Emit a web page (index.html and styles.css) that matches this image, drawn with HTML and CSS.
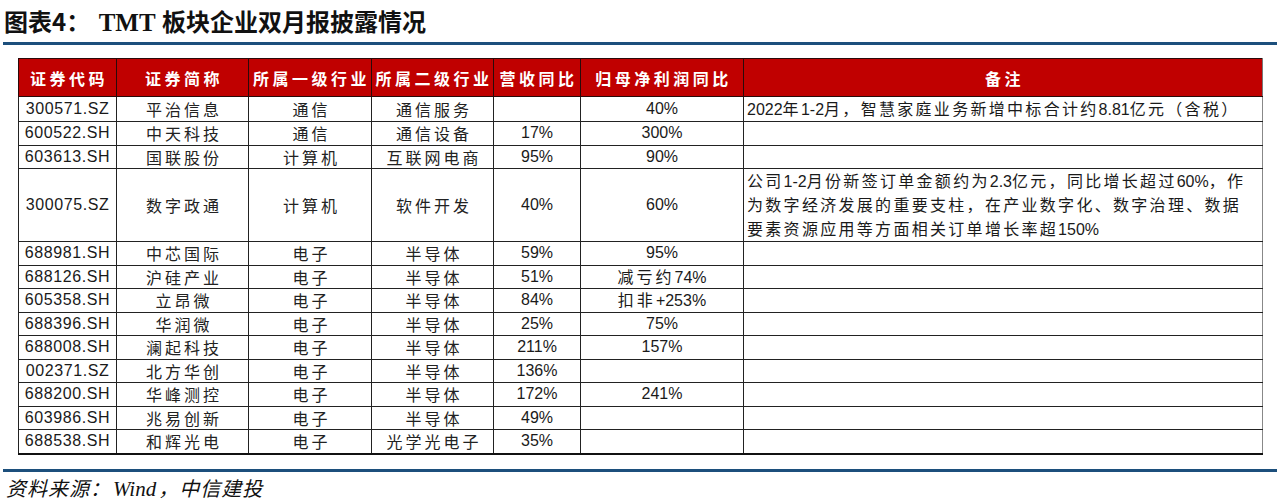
FILE: index.html
```html
<!DOCTYPE html>
<html lang="zh-CN">
<head>
<meta charset="utf-8">
<title>图表4：TMT 板块企业双月报披露情况</title>
<link rel="stylesheet" href="styles.css">
</head>
<body>
<div class="title"><span class="fig">图表4：</span> <span class="tmt">TMT</span> 板块企业双月报披露情况</div>
<div class="rule rule-top"></div>
<table class="grid">
  <colgroup>
    <col class="c1"><col class="c2"><col class="c3"><col class="c4"><col class="c5"><col class="c6"><col class="c7">
  </colgroup>
  <thead>
    <tr>
      <th>证券代码</th><th>证券简称</th><th>所属一级行业</th><th>所属二级行业</th><th>营收同比</th><th>归母净利润同比</th><th class="last">备注</th>
    </tr>
  </thead>
  <tbody>
    <tr><td class="code">300571.SZ</td><td class="cn">平治信息</td><td class="cn">通信</td><td class="cn">通信服务</td><td class="pct"></td><td class="pct">40%</td><td class="note">2022<span class="h">年</span>1-2<span class="h">月，智慧家庭业务新增中标合计约</span>8.81<span class="h">亿元（含税）</span></td></tr>
    <tr><td class="code">600522.SH</td><td class="cn">中天科技</td><td class="cn">通信</td><td class="cn">通信设备</td><td class="pct">17%</td><td class="pct">300%</td><td class="note"></td></tr>
    <tr><td class="code">603613.SH</td><td class="cn">国联股份</td><td class="cn">计算机</td><td class="cn">互联网电商</td><td class="pct">95%</td><td class="pct">90%</td><td class="note"></td></tr>
    <tr class="tall"><td class="code">300075.SZ</td><td class="cn">数字政通</td><td class="cn">计算机</td><td class="cn">软件开发</td><td class="pct">40%</td><td class="pct">60%</td><td class="note"><span class="h">公司</span>1-2<span class="h">月份新签订单金额约为</span>2.3<span class="h">亿元，同比增长超过</span>60%<span class="h">，作</span><br><span class="h">为数字经济发展的重要支柱，在产业数字化、数字治理、数据</span><br><span class="h">要素资源应用等方面相关订单增长率超</span>150%</td></tr>
    <tr><td class="code">688981.SH</td><td class="cn">中芯国际</td><td class="cn">电子</td><td class="cn">半导体</td><td class="pct">59%</td><td class="pct">95%</td><td class="note"></td></tr>
    <tr><td class="code">688126.SH</td><td class="cn">沪硅产业</td><td class="cn">电子</td><td class="cn">半导体</td><td class="pct">51%</td><td class="pct"><span class="h">减亏约</span>74%</td><td class="note"></td></tr>
    <tr><td class="code">605358.SH</td><td class="cn">立昂微</td><td class="cn">电子</td><td class="cn">半导体</td><td class="pct">84%</td><td class="pct"><span class="h">扣非</span>+253%</td><td class="note"></td></tr>
    <tr><td class="code">688396.SH</td><td class="cn">华润微</td><td class="cn">电子</td><td class="cn">半导体</td><td class="pct">25%</td><td class="pct">75%</td><td class="note"></td></tr>
    <tr><td class="code">688008.SH</td><td class="cn">澜起科技</td><td class="cn">电子</td><td class="cn">半导体</td><td class="pct">211%</td><td class="pct">157%</td><td class="note"></td></tr>
    <tr><td class="code">002371.SZ</td><td class="cn">北方华创</td><td class="cn">电子</td><td class="cn">半导体</td><td class="pct">136%</td><td class="pct"></td><td class="note"></td></tr>
    <tr><td class="code">688200.SH</td><td class="cn">华峰测控</td><td class="cn">电子</td><td class="cn">半导体</td><td class="pct">172%</td><td class="pct">241%</td><td class="note"></td></tr>
    <tr><td class="code">603986.SH</td><td class="cn">兆易创新</td><td class="cn">电子</td><td class="cn">半导体</td><td class="pct">49%</td><td class="pct"></td><td class="note"></td></tr>
    <tr><td class="code">688538.SH</td><td class="cn">和辉光电</td><td class="cn">电子</td><td class="cn">光学光电子</td><td class="pct">35%</td><td class="pct"></td><td class="note"></td></tr>
  </tbody>
</table>
<div class="rule rule-bottom"></div>
<div class="source">资料来源：<span class="wind">Wind</span>，中信建投</div>
</body>
</html>
```

FILE: styles.css
```css
html, body {
  margin: 0;
  padding: 0;
  background: #ffffff;
}

body {
  width: 1280px;
  height: 502px;
  overflow: hidden;
  font-family: "Liberation Sans", "Noto Sans CJK SC", sans-serif;
  color: #1a1a1a;
}

.title {
  height: 42px;
  line-height: 42px;
  padding-left: 4px;
  font-family: "Noto Sans CJK SC", sans-serif;
  font-weight: 700;
  font-size: 24px;
  color: #111;
  white-space: nowrap;
}

.title .tmt {
  font-family: "Liberation Serif", serif;
  font-weight: 700;
  font-size: 25px;
  padding: 0 1px 0 3px;
}

.rule {
  background: #1c4f7c;
  margin: 0 3px 0 3px;
}

.rule-top {
  height: 3px;
}

.rule-bottom {
  height: 3px;
  margin-top: 14px;
}

.grid {
  border-collapse: collapse;
  table-layout: fixed;
  width: 1244px;
  margin: 13px 0 0 18px;
  border: 1px solid #111;
  border-bottom-width: 2px;
}

.c1 { width: 98px; }
.c2 { width: 132px; }
.c3 { width: 123px; }
.c4 { width: 122px; }
.c5 { width: 87px; }
.c6 { width: 163px; }
.c7 { width: 519px; }

.grid th {
  height: 37px;
  background: #c00000;
  color: #ffffff;
  font-family: "Noto Sans CJK SC", sans-serif;
  font-weight: 700;
  font-size: 16px;
  letter-spacing: 3.5px;
  padding: 0 0 0 3px;
  border: 1px solid #2a0a0a;
  text-align: center;
  white-space: nowrap;
}

.grid th.last {
  border-right-color: #777;
}

.grid td {
  height: 22.5px;
  padding: 0 3px;
  border: 1px solid #222;
  text-align: center;
  white-space: nowrap;
  line-height: 20px;
  overflow: hidden;
}

.grid td.note {
  border-left-color: #888;
  border-right-color: #888;
}

.grid tr.tall td {
  height: 71px;
}

.code {
  font-family: "Liberation Sans", sans-serif;
  font-size: 16px;
  letter-spacing: 0.6px;
}

.cn {
  font-family: "Noto Sans CJK SC", sans-serif;
  font-size: 16px;
  letter-spacing: 3px;
  color: #222;
}

.grid td.cn {
  padding-left: 6px;
}

.pct {
  font-family: "Liberation Sans Narrow", "Liberation Sans", sans-serif;
  font-size: 16px;
}

.pct .h {
  font-family: "Noto Sans CJK SC", sans-serif;
  letter-spacing: 3px;
}

.grid td.note {
  text-align: left;
  font-family: "Liberation Sans", sans-serif;
  font-size: 16px;
  padding-left: 3px;
  line-height: 23px;
}

.note .h {
  font-family: "Noto Sans CJK SC", sans-serif;
  letter-spacing: 2.3px;
}

.source {
  padding: 3px 0 0 6px;
  font-family: "Noto Sans CJK SC", sans-serif;
  font-style: italic;
  font-size: 20px;
  letter-spacing: 1px;
  line-height: 26px;
  color: #111;
}

.source .wind {
  font-family: "Liberation Serif", serif;
  font-size: 21px;
  letter-spacing: 0;
  padding: 0 2px;
}
```
